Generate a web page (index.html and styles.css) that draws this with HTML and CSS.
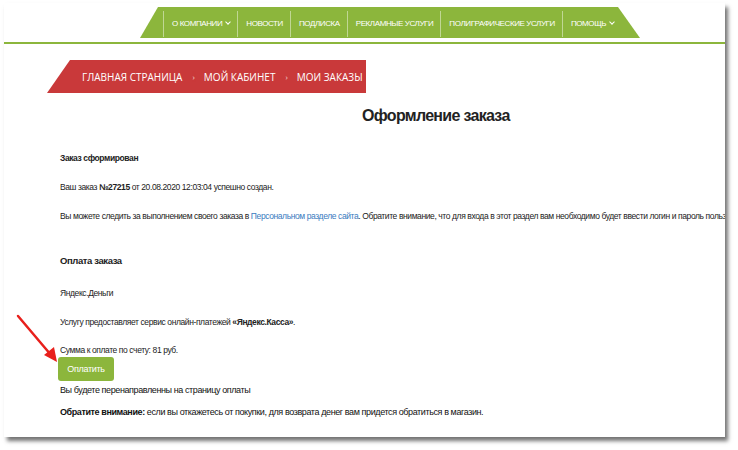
FILE: index.html
```html
<html lang="en">
<head>
  <meta charset="UTF-8">
  <title>Оформление заказа</title>
  <link rel="stylesheet" href="styles.css">
</head>
<body>
  <div class="shot">
    <!-- Top menu -->
    <div class="header">
      <ul class="menu">
        <li>О КОМПАНИИ <span class="caret"></span></li>
        <li>НОВОСТИ</li>
        <li>ПОДЛИСКА</li>
        <li>РЕКЛАМНЫЕ УСЛУГИ</li>
        <li>ПОЛИГРАФИЧЕСКИЕ УСЛУГИ</li>
        <li>ПОМОЩЬ <span class="caret"></span></li>
      </ul>
    </div>

    <!-- Breadcrumbs -->
    <div class="crumbs">
      <a>ГЛАВНАЯ СТРАНИЦА</a><span class="sep">›</span>
      <a>МОЙ КАБИНЕТ</a><span class="sep">›</span>
      <a>МОИ ЗАКАЗЫ</a>
    </div>

    <h1 class="page-title">Оформление заказа</h1>

    <div class="order">
      <p class="done">Заказ сформирован</p>
      <p>Ваш заказ <b>№27215</b> от 20.08.2020 12:03:04 успешно создан.</p>
      <p class="nowrap">Вы можете следить за выполнением своего заказа в <a class="link">Персональном разделе сайта</a>. Обратите внимание, что для входа в этот раздел вам необходимо будет ввести логин и пароль пользователя сайта.</p>

      <h3 class="pay-title">Оплата заказа</h3>
      <p>Яндекс.Деньги</p>
      <p>Услугу предоставляет сервис онлайн-платежей <b>«Яндекс.Касса»</b>.</p>
      <p class="sum">Сумма к оплате по счету: 81 руб.</p>
      <button class="pay-btn">Оплатить</button>
      <p class="note">Вы будете перенаправленны на страницу оплаты</p>
      <p class="note"><b>Обратите внимание:</b> если вы откажетесь от покупки, для возврата денег вам придется обратиться в магазин.</p>
    </div>

    <!-- pointer arrow -->
    <svg class="arrow" width="60" height="60" viewBox="0 0 60 60">
      <line x1="10" y1="10" x2="43" y2="49" stroke="#e8201c" stroke-width="2.5" stroke-linecap="round"/>
      <polygon points="49,56 36,49 46,41" fill="#e8201c"/>
    </svg>
  </div>
</body>
</html>
```

FILE: styles.css
```css
body {
  margin: 0;
  background: #fff;
  font-family: "Liberation Sans", Arial, sans-serif;
  color: #222;
}

/* framed page with a drop shadow */
.shot {
  position: relative;
  margin: 3px 0 0 4px;
  width: 721px;
  height: 434px;
  background: #fff;
  overflow: hidden;
  box-shadow: 3px 4px 4px rgba(0, 0, 0, 0.55);
}

.header {
  height: 35px;
  border-bottom: 2px solid #8cb63c;
}

.menu {
  list-style: none;
  margin: 4px 0 0 136px;
  padding: 0 0 0 23px;
  width: 477px;
  height: 31px;
  display: flex;
  align-items: center;
  background: #8cb63c;
  clip-path: polygon(18px 0, calc(100% - 22px) 0, 100% 100%, 0 100%);
  white-space: nowrap;
}

.menu li {
  height: 26px;
  margin-top: 2px;
  padding: 0 7px 0 8px;
  display: flex;
  align-items: center;
  gap: 4px;
  border-left: 1px solid rgba(255, 255, 255, 0.45);
  color: #fff;
  font-size: 8px;
  letter-spacing: -0.4px;
}

.caret {
  width: 3px;
  height: 3px;
  border-right: 1px solid #fff;
  border-bottom: 1px solid #fff;
  transform: rotate(45deg);
  margin-top: -3px;
}

.crumbs {
  margin: 16px 0 0 43px;
  width: 319px;
  height: 33px;
  padding-left: 35px;
  box-sizing: border-box;
  display: flex;
  align-items: center;
  background: #c9393a;
  clip-path: polygon(23px 0, 100% 0, 100% 100%, 0 100%);
  font-family: "Open Sans", sans-serif;
  font-size: 10px;
  color: #fff;
  white-space: nowrap;
}

.crumbs .sep {
  margin: 0 9px 0 10px;
  font-size: 8px;
  opacity: 0.75;
}

.page-title {
  margin: 13px 0 0 358px;
  font-size: 16px;
  line-height: 20px;
  letter-spacing: -0.7px;
  font-weight: bold;
  color: #222;
}

.order {
  padding-left: 56px;
  font-size: 8.5px;
  letter-spacing: -0.4px;
}

.order p {
  margin: 0;
  line-height: 14px;
}

.order .done {
  margin-top: 25px;
  font-weight: bold;
}

.order .done + p {
  margin-top: 15px;
}

.order .nowrap {
  margin-top: 15px;
  white-space: nowrap;
}

.link {
  color: #3a7bc0;
}

.pay-title {
  margin: 30px 0 0;
  font-size: 9.5px;
  line-height: 16px;
}

.pay-title + p {
  margin-top: 17px;
}

.pay-title + p + p {
  margin-top: 15px;
}

.order .sum {
  margin-top: 14px;
}

.pay-btn {
  display: block;
  margin: 0 0 0 -2px;
  width: 56px;
  height: 24px;
  border: 0;
  border-radius: 3px;
  background: #8cb63c;
  color: #fff;
  font-family: inherit;
  font-size: 9px;
  letter-spacing: -0.3px;
}

.order .note {
  font-size: 9px;
  line-height: 16px;
  color: #111;
}

.order .pay-btn + .note {
  margin-top: 1px;
}

.order .note + .note {
  margin-top: 6px;
}

.arrow {
  position: absolute;
  left: 4px;
  top: 303px;
}
```
